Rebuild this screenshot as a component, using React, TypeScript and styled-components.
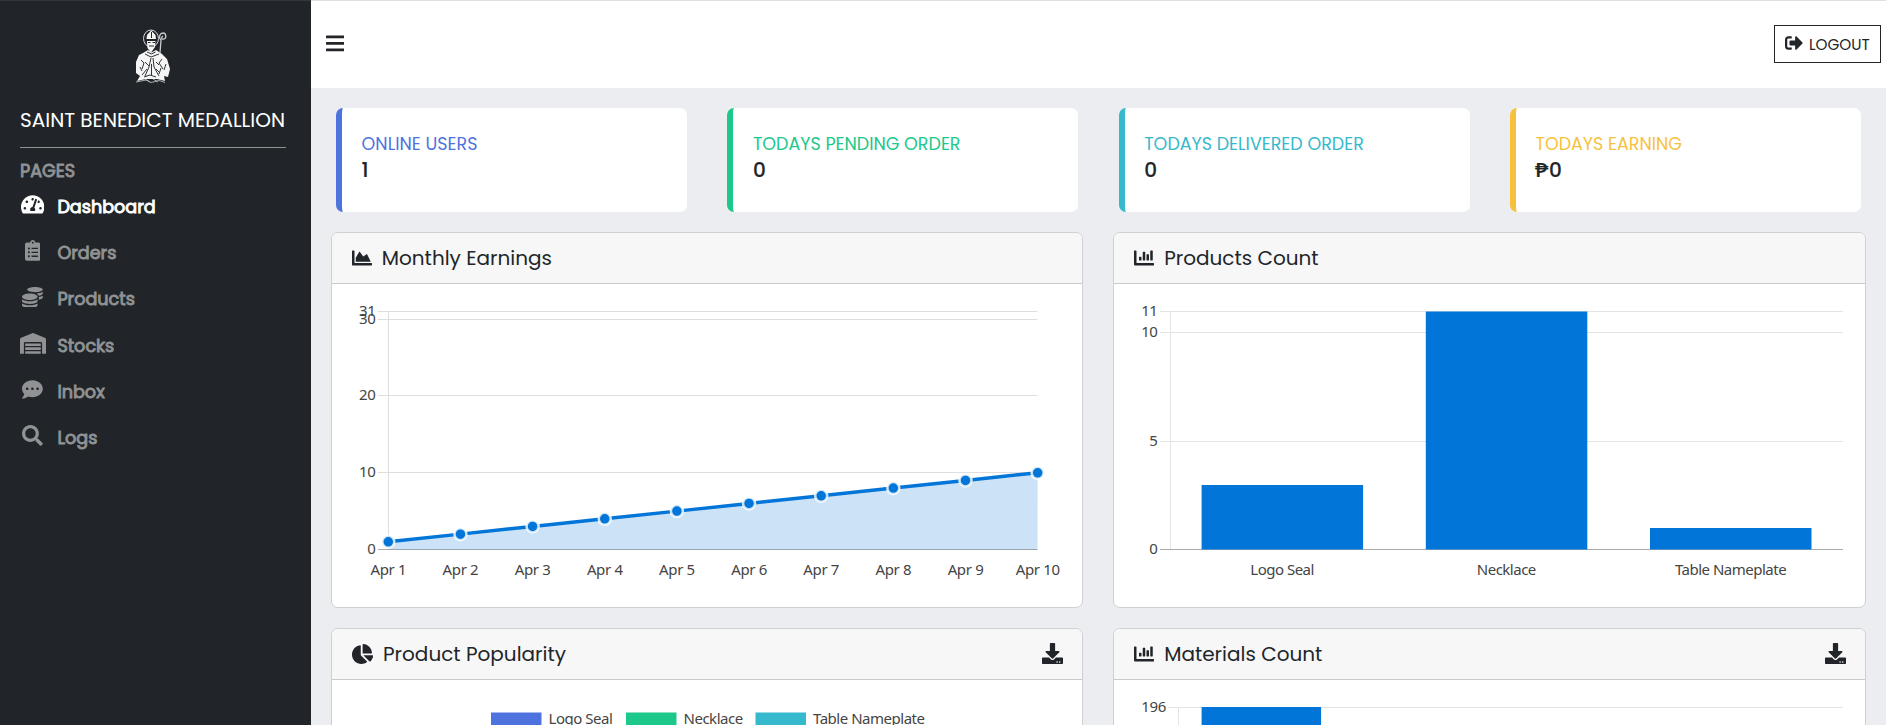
import React from 'react';
import styled, { createGlobalStyle } from 'styled-components';
import { FaTachometerAlt, FaClipboardList, FaCoins, FaWarehouse, FaCommentDots, FaSearch, FaChartArea, FaChartBar, FaChartPie, FaSignOutAlt, FaBars, FaDownload } from 'react-icons/fa';

const Global = createGlobalStyle`
  * { box-sizing: border-box; }
  html, body { margin: 0; background: #ecedf1; overflow: hidden; }
  body { font-family: Poppins, Inter, "Open Sans", sans-serif; color: #212529; }
`;

const Shell = styled.div`
  display: flex;
  height: 725px;
  overflow: hidden;
`;
const Sidebar = styled.aside`
  flex: 0 0 311px;
  height: 725px;
  padding: 30px 25px 0 20px;
  background: #212529;
  border-top: 1px solid #33373b;
`;
const Logo = styled.svg`
  display: block;
  width: 36px;
  height: 54px;
  margin: -2px auto 0 115px;
`;
const Brand = styled.div`
  height: 36px;
  margin-top: 19px;
  color: #fff;
  font-size: 20px;
  line-height: 36px;
  white-space: nowrap;
`;
const Rule = styled.div`
  height: 1px;
  margin-top: 9px;
  background: #909294;
`;
const Section = styled.div`
  height: 24px;
  margin-top: 11px;
  font-size: 17.6px;
  font-weight: 400;
  -webkit-text-stroke: 0.9px currentColor;
  line-height: 24px;
  color: #909294;
`;
const NavItem = styled.a<{ $active?: boolean }>`
  display: flex;
  align-items: center;
  height: 46.2px;
  color: ${(p) => (p.$active ? '#fff' : '#909294')};
  font-size: 17.6px;
  font-weight: 400;
`;
const NavLabel = styled.span`
  white-space: nowrap;
  -webkit-text-stroke: 0.9px currentColor;
`;
const Nav = styled.nav`
  margin-top: 1px;
`;
const NavIcon = styled.span<{ $w: number }>`
  display: flex;
  justify-content: center;
  width: 25px;
  margin: -5px 12.4px 0 0;
  font-size: 20.8px;
  svg { width: ${(p) => p.$w}px; flex: none; }
`;
const Main = styled.main`
  flex: 1;
  min-width: 0;
`;
const Topbar = styled.header`
  display: flex;
  align-items: center;
  justify-content: space-between;
  height: 88px;
  padding: 0 5px 1px 15px;
  background: #fff;
  border-top: 1px solid #dedfe0;
`;
const Menu = styled.span`
  display: flex;
  margin-top: -1px;
  font-size: 20.8px;
  svg { width: 18.2px; }
`;
const Logout = styled.button`
  display: flex;
  align-items: center;
  gap: 6px;
  width: 107px;
  height: 38px;
  padding: 0 0 0 10px;
  border: 1px solid #212529;
  background: #fff;
  color: #212529;
  font: 15.2px Poppins, Inter, sans-serif;
  white-space: nowrap;
  svg { font-size: 18px; margin-top: -2px; flex: none; }
`;
const Stats = styled.div`
  display: grid;
  grid-template-columns: repeat(4, 351.2px);
  gap: 40.1px;
  padding: 20px 0 0 25px;
`;
const Stat = styled.section<{ $color: string }>`
  height: 104px;
  padding: 24px 0 0 19.6px;
  background: #fff;
  border-left: 6px solid ${(p) => p.$color};
  border-radius: 7px;
`;
const StatLabel = styled.div<{ $color: string }>`
  height: 24px;
  font-size: 17.5px;
  line-height: 24px;
  white-space: nowrap;
  color: ${(p) => p.$color};
`;
const StatValue = styled.div`
  height: 28px;
  font-size: 20px;
  font-weight: 500;
  line-height: 28px;
  -webkit-text-stroke: 0.2px currentColor;
`;
const Peso = styled.span`
  display: inline-block;
  margin-right: 2px;
  font-family: "Noto Sans", sans-serif;
  line-height: 24px;
  transform: scaleX(1.17);
  transform-origin: left;
`;
const Cards = styled.div`
  display: grid;
  grid-template-columns: 752px 752.6px;
  gap: 20px 30.4px;
  padding: 20px 0 0 20px;
`;
const Card = styled.section`
  height: 376px;
  background: #fff;
  border: 1px solid #ced0d1;
  border-radius: 7px;
  overflow: hidden;
`;
const CardHead = styled.div<{ $icon?: number }>`
  display: flex;
  align-items: center;
  height: 51px;
  padding: 0 19px 0 19.6px;
  background: #f7f7f7;
  border-bottom: 1px solid #c8cacb;
  font-size: 20px;
  svg { flex: none; width: ${(p) => p.$icon ?? 20}px; }
  h2 + svg { width: 21px; height: 21px; margin-top: -1px; }
`;
const CardTitle = styled.h2`
  flex: 1;
  margin: 0 0 0 10.2px;
  font-size: 20px;
  font-weight: 400;
`;
const Chart = styled.svg<{ $tracking?: number }>`
  display: block;
  width: 750px;
  height: 323px;
  text {
    font-family: "Segoe UI", "Noto Sans", sans-serif;
    font-size: 15px;
    letter-spacing: ${(p) => p.$tracking ?? -0.35}px;
    fill: #444;
  }
`;

const NAV = [
  { label: 'Dashboard', icon: <FaTachometerAlt />, w: 23.4, active: true },
  { label: 'Orders', icon: <FaClipboardList />, w: 15.6 },
  { label: 'Products', icon: <FaCoins />, w: 20.8 },
  { label: 'Stocks', icon: <FaWarehouse />, w: 26 },
  { label: 'Inbox', icon: <FaCommentDots />, w: 20.8 },
  { label: 'Logs', icon: <FaSearch />, w: 20.8 },
];
const STATS = [
  { label: 'ONLINE USERS', value: '1', color: '#4e73df' },
  { label: 'TODAYS PENDING ORDER', value: '0', color: '#1cc88a' },
  { label: 'TODAYS DELIVERED ORDER', value: '0', color: '#36b9cc' },
  { label: 'TODAYS EARNING', value: '0', color: '#f6c23e', peso: true },
];

function Saint() {
  return (
    <Logo viewBox="0 0 36 54" fill="#f5f5f5">
      <ellipse cx="16" cy="9.5" rx="7.5" ry="8.5" fill="none" stroke="#d5d7d8" />
      <path d="M11.5 10 12 6l4.2-4.5L20.5 6l.5 4zM12 12h8.5l-.5 6-3.500 5h-1l-3-4z" />
      <path d="M12 10.5h8.5M13 13.5h2.5m2 0H20M14 17h5M16.5 3v6" stroke="#212529" />
      <path d="m8 24 5-3 3.500 2.500L21 21l6 4 5 5 3 10-2 8-4-1 1 5-8-2H11l-9 2 3-5-4-3 0-11 3-7z" />
      <path d="m10 25 6 3 8-3M12 23l4.500 2 4-2M16 29l-2 9-4 9m8-18 1 9 5 9M6 31l3 3-2 6m3-7 4 4m-2 3-5 6M27 30l-3 4 4 6m-7-7 3 3m2 3-2 6M16.500 35v12M5 38l2 4m24-7-2 6m-8-1 3 3M9 48l6-2 6 2" fill="none" stroke="#303438" strokeWidth="1" />
      <path d="m10 50 5 3m3-3 5 3M1 53l10-2 5 2.500 8-2 6 2" fill="none" stroke="#ccc" strokeWidth=".8" />
      <path d="M25 24l1-13c-3-3-1-7 2-7s4 5 1 6-3-2-1-3" fill="none" stroke="#c9cbcc" strokeWidth="1.3" />
    </Logo>
  );
}

/* Plot coordinates are relative to the body of the card. */
function EarningsChart() {
  const pts = Array.from({ length: 10 }, (_, i) => [56.3 + i * 72.15, 257.8 - i * 7.67]);
  const path = pts.map((p) => p.join(',')).join(' L');
  return (
    <Chart viewBox="0 0 750 323">
      {[[27.5, '31'], [35.5, '30'], [111.5, '20'], [188.5, '10'], [265.5, '0']].map(([y, t]) => (
        <React.Fragment key={t}>
          <path d={`M46 ${y}H705.5`} stroke={t === '0' ? '#aaa' : '#dedede'} />
          <text x="43.4" y={Number(y) + 4.7} textAnchor="end">{t}</text>
        </React.Fragment>
      ))}
      <path d="M56.5 27V265" stroke="#dedede" />
      <path d={`M${path} L705.6 265.5 L56.3 265.5Z`} fill="rgba(2,117,216,.2)" />
      <path d={`M${path}`} fill="none" stroke="#0275d8" strokeWidth="3.5" />
      {pts.map(([x, y], i) => (
        <React.Fragment key={i}>
          <circle cx={x} cy={y} r="6" fill="#0275d8" stroke="rgba(255,255,255,.8)" strokeWidth="2.5" />
          <text x={x} y="291" textAnchor="middle">{`Apr ${i + 1}`}</text>
        </React.Fragment>
      ))}
    </Chart>
  );
}

function ProductsChart() {
  return (
    <Chart viewBox="0 0 750 323" $tracking={-0.5}>
      {[[27.5, '11'], [48.5, '10'], [157.5, '5'], [265.5, '0']].map(([y, t]) => (
        <React.Fragment key={t}>
          <path d={`M46 ${y}H729`} stroke={t === '0' ? '#aaa' : '#e4e4e4'} />
          <text x="43.4" y={Number(y) + 4.7} textAnchor="end">{t}</text>
        </React.Fragment>
      ))}
      <path d="M56.5 27V265" stroke="#e4e4e4" />
      {[[87.6, 201, 'Logo Seal'], [311.8, 27.5, 'Necklace'], [536, 244, 'Table Nameplate']].map(([x, y, t]) => (
        <React.Fragment key={t}>
          <rect x={x} y={y} width="161.5" height={265.5 - Number(y)} fill="#0275d8" />
          <text x={Number(x) + 80.5} y="291" textAnchor="middle">{t}</text>
        </React.Fragment>
      ))}
    </Chart>
  );
}

function PopularityChart() {
  return (
    <Chart viewBox="0 0 750 323" $tracking={-0.48}>
      {[[159, '#4e73df', 'Logo Seal'], [294, '#1cc88a', 'Necklace'], [423.5, '#36b9cc', 'Table Nameplate']].map(([x, c, t]) => (
        <React.Fragment key={t}>
          <rect x={x} y="32.5" width="50.5" height="15" fill={String(c)} />
          <text x={Number(x) + 57.5} y="44">{t}</text>
        </React.Fragment>
      ))}
    </Chart>
  );
}

function MaterialsChart() {
  return (
    <Chart viewBox="0 0 750 323">
      <path d="M54 27.5H729M64.5 27V265" stroke="#e4e4e4" />
      <text x="52" y="32.2" textAnchor="end">196</text>
      <rect x="87.6" y="27" width="119.5" height="238" fill="#0275d8" />
    </Chart>
  );
}

export default function App() {
  return (
    <>
      <Global />
      <Shell>
        <Sidebar>
          <Saint />
          <Brand>SAINT BENEDICT MEDALLION</Brand>
          <Rule />
          <Section>PAGES</Section>
          <Nav>
            {NAV.map((n) => (
              <NavItem key={n.label} $active={n.active}>
                <NavIcon $w={n.w}>{n.icon}</NavIcon>
                <NavLabel>{n.label}</NavLabel>
              </NavItem>
            ))}
          </Nav>
        </Sidebar>
        <Main>
          <Topbar>
            <Menu><FaBars /></Menu>
            <Logout><FaSignOutAlt />LOGOUT</Logout>
          </Topbar>
          <Stats>
            {STATS.map((s) => (
              <Stat key={s.label} $color={s.color}>
                <StatLabel $color={s.color}>{s.label}</StatLabel>
                <StatValue>{s.peso && <Peso>₱</Peso>}{s.value}</StatValue>
              </Stat>
            ))}
          </Stats>
          <Cards>
            <Card>
              <CardHead><FaChartArea /><CardTitle>Monthly Earnings</CardTitle></CardHead>
              <EarningsChart />
            </Card>
            <Card>
              <CardHead><FaChartBar /><CardTitle>Products Count</CardTitle></CardHead>
              <ProductsChart />
            </Card>
            <Card>
              <CardHead $icon={21.25}><FaChartPie /><CardTitle>Product Popularity</CardTitle><FaDownload /></CardHead>
              <PopularityChart />
            </Card>
            <Card>
              <CardHead><FaChartBar /><CardTitle>Materials Count</CardTitle><FaDownload /></CardHead>
              <MaterialsChart />
            </Card>
          </Cards>
        </Main>
      </Shell>
    </>
  );
}
